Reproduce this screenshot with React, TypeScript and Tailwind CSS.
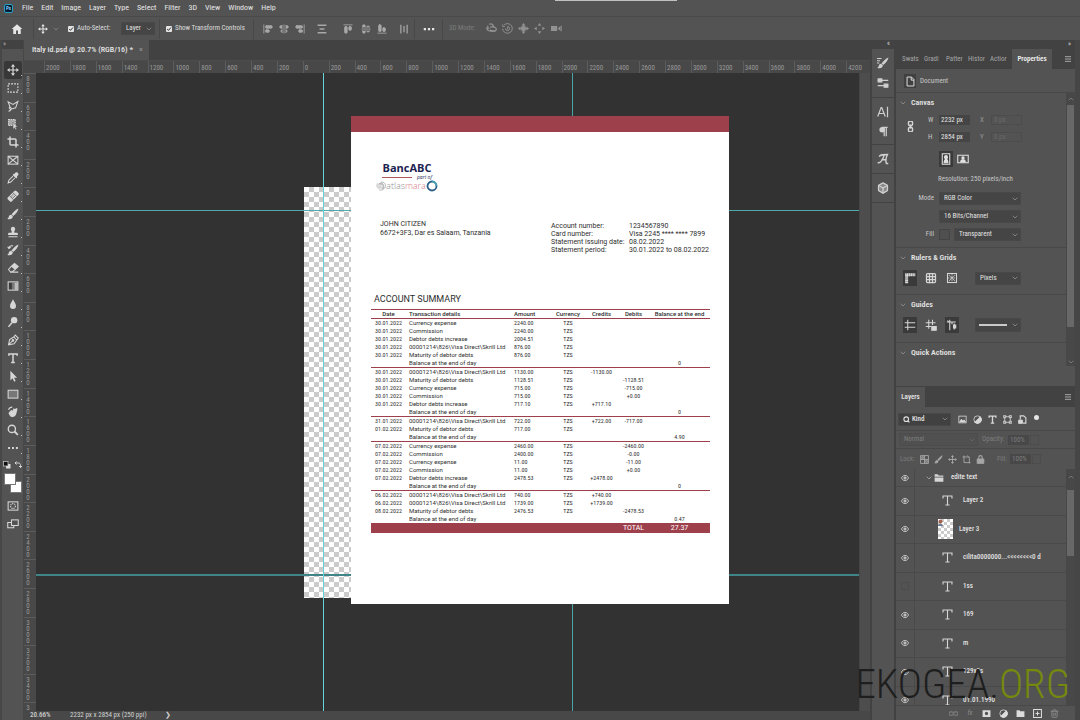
import type { ReactNode } from "react";
import {
  AlignCenterHorizontal,
  AlignCenterVertical,
  AlignEndHorizontal,
  AlignEndVertical,
  AlignStartHorizontal,
  AlignStartVertical,
  Box,
  ChevronDown,
  ChevronUp,
  Crop,
  Grid3x3,
  Image,
  Menu,
  Search,
  Trash2
} from "lucide-react";

const menuItems = ["File", "Edit", "Image", "Layer", "Type", "Select", "Filter", "3D", "View", "Window", "Help"];
const panelTabs = ["Swats", "Gradi", "Patter", "Histor", "Actior"];

const horizontalMarks = Array.from({ length: 32 }, (_, index) => Math.abs(index - 10) * 200);
const verticalMarks = Array.from({ length: 23 }, (_, index) => Math.abs(index - 4) * 200);

const accountFields = [
  ["Account number:", "1234567890"],
  ["Card number:", "Visa 2245 **** **** 7899"],
  ["Statement issuing date:", "08.02.2022"],
  ["Statement period:", "30.01.2022 to 08.02.2022"]
];

// date, details, amount, currency, credits, debits, balance
const groups = [
  [
    ["30.01.2022", "Currency expense", "2240.00", "TZS", "", "", ""],
    ["30.01.2022", "Commission", "2240.00", "TZS", "", "", ""],
    ["30.01.2022", "Debtor debts increase", "2004.51", "TZS", "", "", ""],
    ["30.01.2022", "00001214\\826\\Visa Direct\\Skrill Ltd", "876.00", "TZS", "", "", ""],
    ["30.01.2022", "Maturity of debtor debts", "876.00", "TZS", "", "", ""],
    ["", "Balance at the end of day", "", "", "", "", "0"]
  ],
  [
    ["30.01.2022", "00001214\\826\\Visa Direct\\Skrill Ltd", "1130.00", "TZS", "-1130.00", "", ""],
    ["30.01.2022", "Maturity of debtor debts", "1128.51", "TZS", "", "-1128.51", ""],
    ["30.01.2022", "Currency expense", "715.00", "TZS", "", "-715.00", ""],
    ["30.01.2022", "Commission", "715.00", "TZS", "", "+0.00", ""],
    ["30.01.2022", "Debtor debts increase", "717.10", "TZS", "+717.10", "", ""],
    ["", "Balance at the end of day", "", "", "", "", "0"]
  ],
  [
    ["31.01.2022", "00001214\\826\\Visa Direct\\Skrill Ltd", "722.00", "TZS", "+722.00", "-717.00", ""],
    ["01.02.2022", "Maturity of debtor debts", "717.00", "TZS", "", "", ""],
    ["", "Balance at the end of day", "", "", "", "", "4.90"]
  ],
  [
    ["07.02.2022", "Currency expense", "2460.00", "TZS", "", "-2460.00", ""],
    ["07.02.2022", "Commission", "2400.00", "TZS", "", "-0.00", ""],
    ["07.02.2022", "Currency expense", "11.00", "TZS", "", "-11.00", ""],
    ["07.02.2022", "Commission", "11.00", "TZS", "", "+0.00", ""],
    ["07.02.2022", "Debtor debts increase", "2478.53", "TZS", "+2478.00", "", ""],
    ["", "Balance at the end of day", "", "", "", "", "0"]
  ],
  [
    ["06.02.2022", "00001214\\826\\Visa Direct\\Skrill Ltd", "740.00", "TZS", "+740.00", "", ""],
    ["06.02.2022", "00001214\\826\\Visa Direct\\Skrill Ltd", "1739.00", "TZS", "+1739.00", "", ""],
    ["08.02.2022", "Maturity of debtor debts", "2476.53", "TZS", "", "-2478.53", ""],
    ["", "Balance at the end of day", "", "", "", "", "0.47"]
  ]
];

const layers = [
  { name: "Layer 2", visible: true },
  { name: "Layer 3", visible: true, thumb: true },
  { name: "cilita0000000...<<<<<<<<0 d", visible: true },
  { name: "1ss", visible: false },
  { name: "169", visible: true },
  { name: "m", visible: true },
  { name: "129x2s", visible: true },
  { name: "01.01.1990", visible: true }
];

function Glyph({ size = "size-3", children }: { size?: string; children: ReactNode }) {
  return (
    <svg viewBox="0 0 16 16" className={`${size} shrink-0`} fill="none" stroke="currentColor" strokeWidth="1.4" aria-hidden="true">
      {children}
    </svg>
  );
}

const moveShape = (
  <g fill="currentColor" stroke="none">
    <path d="M8 0l2.800 3.600H5.200zM8 16l2.800-3.600H5.200zM0 8l3.600-2.800v5.600zM16 8l-3.600-2.800v5.600z" />
    <path d="M7.200 3h1.600v10H7.200zM3 7.200h10v1.600H3z" />
  </g>
);

const brushShape = (
  <g fill="currentColor" stroke="none">
    <path d="M15.300.5c-3.500 1.600-7 4.700-9.300 8l2.200 2C11.500 8 14.500 4.500 15.300.5z" />
    <path d="M5.500 9c-2.200.1-3 1.500-3.200 3-.2 1.200-.9 1.900-2 2.200 2.900 1.500 7.400.8 7.500-3.200z" />
  </g>
);

const tools: { label: string; shape: ReactNode }[] = [
  { label: "Move", shape: moveShape },
  { label: "Marquee", shape: <rect x="1.500" y="2.500" width="13" height="11" strokeDasharray="2.500 1.500" /> },
  { label: "Lasso", shape: <path d="M4 9L1.500 2.500 8 6l6.500-4-3 8.500-5 1.500L4 9c-1.500.5-1.500 3 .5 3S4 15 2 15" /> },
  {
    label: "Object selection",
    shape: (
      <>
        <rect x="2" y="2" width="9" height="8" fill="currentColor" fillOpacity=".65" strokeDasharray="2 1" />
        <path d="M8 6v9l2-2 1.500 2.500 1.300-.8L11.500 12H14z" fill="currentColor" stroke="#535353" strokeWidth=".6" />
      </>
    )
  },
  { label: "Crop", shape: <Crop x="0" y="0" width="16" height="16" strokeWidth={3} /> },
  {
    label: "Frame",
    shape: (
      <>
        <rect x="1.500" y="3" width="13" height="10.500" />
        <path d="M1.500 3l13 10.500M14.500 3l-13 10.500" />
      </>
    )
  },
  {
    label: "Eyedropper",
    shape: (
      <>
        <path d="M9.500 2.500L11.500.8c2-1.300 4.600 1.200 3.500 3.300L13.300 6l.6 1-1.700 1.500L7.500 4l1.500-1.800z" fill="currentColor" stroke="none" />
        <path d="M8 5.500L2.500 11 1.500 14.500 5 13.500 10.500 8" />
      </>
    )
  },
  {
    label: "Healing brush",
    shape: (
      <g transform="rotate(-45 8 8)">
        <rect x="0" y="4.500" width="16" height="7.500" rx="2" fill="currentColor" stroke="none" />
        <path d="M5 4.500v7.500M11 4.500v7.500" stroke="#535353" strokeWidth="1" />
        <path d="M6.500 7h3M6.500 9.500h3" stroke="#535353" strokeDasharray="1 1" />
      </g>
    )
  },
  { label: "Brush", shape: brushShape },
  {
    label: "Clone stamp",
    shape: <path d="M8 1a3 3 0 00-2.500 4.500C6.500 7 6.500 8 6 9H3c-1 0-1.500.7-1.500 1.500V12h13v-1.500c0-.8-.5-1.500-1.500-1.500h-3c-.5-1-.5-2 .5-3.500A3 3 0 008 1zM2 13.500h12V15H2z" fill="currentColor" stroke="none" />
  },
  {
    label: "History brush",
    shape: (
      <>
        {brushShape}
        <path d="M1 3.500l1.500 2.500L5 4.500M2.500 6C3 3.500 5 2 8 2.500" />
      </>
    )
  },
  {
    label: "Eraser",
    shape: (
      <>
        <path d="M6 5.500L10 2l5 4-4 3.800z" fill="currentColor" />
        <path d="M6 5.500L2 10l2.500 3H7l4-3.200M4 13.500h11" />
      </>
    )
  },
  {
    label: "Gradient",
    shape: (
      <>
        <rect x="2.500" y="3.500" width="4" height="9.500" fill="#3c3c3c" stroke="none" />
        <rect x="6.500" y="3.500" width="3.500" height="9.500" fill="#777" stroke="none" />
        <rect x="10" y="3.500" width="4" height="9.500" fill="#bbb" stroke="none" />
        <rect x="1.500" y="2.500" width="13" height="11" />
      </>
    )
  },
  { label: "Blur", shape: <path d="M8 1.500C6.500 5 4 7.500 4 10.500a4 4 0 008 0C12 7.500 9.500 5 8 1.500z" fill="currentColor" stroke="none" /> },
  {
    label: "Dodge",
    shape: (
      <>
        <circle cx="9.500" cy="5.500" r="4.300" fill="currentColor" stroke="none" />
        <path d="M6.500 9L2 14.500" strokeWidth="2" />
      </>
    )
  },
  {
    label: "Pen",
    shape: (
      <>
        <path d="M2 14.500L3.500 7.500 9 4l4 4-3.500 5zM2 14.500L7.500 9M9 4l2-2.500L15 5.500 13 8" />
        <circle cx="8" cy="8.500" r="1" fill="currentColor" />
      </>
    )
  },
  { label: "Type", shape: <path d="M2.500 5V2.500h11V5M8 2.500v11M5.500 14h5" strokeWidth="2" /> },
  { label: "Path selection", shape: <path d="M4.500 1v13l3-3 2 4.500 2-1-2-4.300H13.500z" fill="currentColor" stroke="none" /> },
  { label: "Rectangle", shape: <rect x="1.500" y="3" width="13" height="10.500" fill="#777" /> },
  {
    label: "Hand",
    shape: (
      <>
        <path d="M3 8l3-3 1 1.500L9 3l1.500 1L13 2.500l1 1.500-1.500 6c-.8 3-3 5-6 4.500-2-.3-3-2-4.500-5z" fill="currentColor" stroke="none" />
        <path d="M2 5C3 2.500 5 1.500 7 1.500" />
      </>
    )
  },
  {
    label: "Zoom",
    shape: (
      <>
        <circle cx="6.500" cy="6.500" r="4.800" strokeWidth="1.800" />
        <path d="M10 10l4.500 4.500" strokeWidth="2.400" />
      </>
    )
  },
  { label: "More tools", shape: <path d="M1.500 8h2.600M6.700 8h2.600M11.900 8h2.600" strokeWidth="2.600" /> }
];

function Divider() {
  return <span className="h-5 w-px bg-[#484848]" />;
}

function IconButton({ label, className = "", children }: { label: string; className?: string; children: ReactNode }) {
  return (
    <button type="button" aria-label={label} className={`flex shrink-0 items-center justify-center ${className}`}>
      {children}
    </button>
  );
}

function Select({ label, value, className = "", dim = false }: { label: string; value: string; className?: string; dim?: boolean }) {
  return (
    <span className={`relative flex h-[13px] shrink-0 items-center border ${dim ? "border-[#4c4c4c] bg-[#505050] text-[#7d7d7d]" : "border-[#484848] bg-[#454545] text-[#e2e2e2]"} ${className}`}>
      <select aria-label={label} className="size-full appearance-none bg-transparent pl-1 text-[7px] leading-[11px]">
        <option>{value}</option>
      </select>
      <ChevronDown className={`pointer-events-none absolute right-px size-2 ${dim ? "text-[#6c6c6c]" : "text-[#a0a0a0]"}`} strokeWidth={2} />
    </span>
  );
}

function CheckOption({ id, label }: { id: string; label: string }) {
  return (
    <span className="flex items-center gap-[3px] whitespace-nowrap">
      <span className="relative flex size-[6px] shrink-0">
        <input id={id} type="checkbox" defaultChecked className="peer size-[6px] appearance-none rounded-[1px] bg-[#e4e4e4]" />
        <svg viewBox="0 0 6 6" className="pointer-events-none absolute inset-0 hidden size-[6px] peer-checked:block" fill="none" stroke="#333" strokeWidth="1">
          <path d="M1.200 3l1.300 1.400L4.900 1.500" />
        </svg>
      </span>
      <label htmlFor={id}>{label}</label>
    </span>
  );
}

function MenuBar() {
  return (
    <nav className="flex h-[17px] shrink-0 items-center border-b border-[#494949] pl-1 text-[8px] leading-[10px] text-[#e6e6e6]">
      <span className="mr-[9px] flex size-[9px] items-center justify-center rounded-[2px] border border-[#2aa3c4] bg-[#001d33] text-[5px] font-bold text-[#8fd3ff]">Ps</span>
      <div className="flex gap-2">
        {menuItems.map((item) => (
          <button key={item} type="button">
            {item}
          </button>
        ))}
      </div>
    </nav>
  );
}

function OptionsBar() {
  return (
    <div className="flex h-[23px] shrink-0 items-center text-[7px] leading-[9px] text-[#dedede]">
      <IconButton label="Home" className="w-[33px] text-[#e6e6e6]">
        <Glyph>
          <path d="M8 1.500L1 8h2v6.500h3.700V10h2.600v4.500H13V8h2z" fill="currentColor" stroke="none" />
        </Glyph>
      </IconButton>
      <Divider />
      <IconButton label="Move tool" className="w-[18px] text-[#e6e6e6]">
        <Glyph size="size-2.5">{moveShape}</Glyph>
      </IconButton>
      <ChevronDown className="mr-1 size-2 text-[#909090]" />
      <div className="w-[57px] pl-1">
        <CheckOption id="auto-select" label="Auto-Select:" />
      </div>
      <Select label="Auto-select target" value="Layer" className="w-[34px]" />
      <span className="w-1" />
      <Divider />
      <div className="w-[93px] pl-1.5">
        <CheckOption id="transform-controls" label="Show Transform Controls" />
      </div>
      <Divider />
      <div className="flex w-[160px] items-center pl-1.5 text-[#a8a8a8]">
        <IconButton label="Align left edges" className="w-4"><AlignStartVertical className="size-2.5" fill="currentColor" /></IconButton>
        <IconButton label="Align horizontal centers" className="w-4"><AlignCenterVertical className="size-2.5" fill="currentColor" /></IconButton>
        <IconButton label="Align right edges" className="w-4"><AlignEndVertical className="size-2.5" fill="currentColor" /></IconButton>
        <IconButton label="Distribute vertically" className="w-7">
          <Glyph size="size-2.5"><path d="M1 2h14M1 14h14M4 8h8" strokeWidth="2.200" /></Glyph>
        </IconButton>
        <IconButton label="Align top edges" className="ml-0.5 w-5"><AlignStartHorizontal className="size-2.5" fill="currentColor" /></IconButton>
        <IconButton label="Align vertical centers" className="w-4"><AlignCenterHorizontal className="size-2.5" fill="currentColor" /></IconButton>
        <IconButton label="Align bottom edges" className="w-4"><AlignEndHorizontal className="size-2.5" fill="currentColor" /></IconButton>
        <IconButton label="Distribute horizontally" className="w-7">
          <Glyph size="size-2.5"><path d="M3 1v14M13 1v14M8 3v10" strokeWidth="2" /></Glyph>
        </IconButton>
      </div>
      <Divider />
      <IconButton label="More options" className="w-[27px] text-[#e6e6e6]">
        <Glyph><path d="M1 8h3M6.500 8h3M12 8h3" strokeWidth="3" /></Glyph>
      </IconButton>
      <Divider />
      <span className="w-10 pl-1.5 text-[#7c7c7c]">3D Mode:</span>
      <div className="flex text-[#929292]">
        <IconButton label="Orbit" className="w-4">
          <Glyph size="size-[11px]"><path d="M5 2c3-2 7 1 5 4M2 6c-3 4 3 7 12 6M6 6c4-1 9 0 9 3s-6 3-9 1M3 4l-1 3 3 1" strokeWidth="1.800" /></Glyph>
        </IconButton>
        <IconButton label="Roll" className="w-4">
          <Glyph size="size-[11px]"><path d="M3 3a7 7 0 11-2 5M1 2v3h3M8 5a3 3 0 11-3 3M8 6v3" /></Glyph>
        </IconButton>
        <IconButton label="Pan" className="w-4">
          <Glyph size="size-[11px]">{moveShape}<rect x="5.500" y="5.500" width="5" height="5" fill="currentColor" /></Glyph>
        </IconButton>
        <IconButton label="Slide" className="w-[17px]">
          <Glyph size="size-[11px]"><path d="M8 0l2.500 4h-5zM0 8l4-2.500v5zM16 8l-4-2.500v5zM8 16l2.500-4h-5z" fill="currentColor" stroke="none" /></Glyph>
        </IconButton>
        <IconButton label="Camera" className="w-4">
          <Glyph size="size-[11px]"><path d="M0 4.500h9v7H0zM10 8l4-4v8zM15 4h1v8h-1z" fill="currentColor" stroke="none" /></Glyph>
        </IconButton>
      </div>
    </div>
  );
}

function Toolbar() {
  return (
    <aside className="flex w-6 shrink-0 flex-col border-r border-l-2 border-[#474747]">
      <div className="flex h-[9px] shrink-0 items-center bg-[#424242] pl-px text-[7px] leading-[9px] text-[#b0b0b0]">»</div>
      <div className="flex flex-col items-center pt-3 text-[#d6d6d6]">
        {tools.map((tool, index) => (
          <button
            key={tool.label}
            type="button"
            aria-label={tool.label}
            className={`relative flex h-[18px] w-[18px] items-center justify-center ${index === 0 ? "rounded-[2px] bg-[#383838]" : ""}`}
          >
            <Glyph>{tool.shape}</Glyph>
            <span className="absolute right-0 bottom-[3px] size-px bg-[#bdbdbd]" />
          </button>
        ))}
        <div className="flex h-4 w-full items-center justify-around">
          <Glyph size="size-2">
            <rect x="6" y="6" width="9" height="9" fill="#ddd" stroke="none" />
            <rect x="1" y="1" width="9" height="9" fill="#111" stroke="#ccc" />
          </Glyph>
          <Glyph size="size-2"><path d="M2 4h7c3 0 4 2 4 5v4M5 1L2 4l3 3M10 10l3 3 3-3" strokeWidth="2" /></Glyph>
        </div>
        <div className="relative h-5 w-[18px]">
          <span className="absolute right-0 bottom-0 size-3 border border-[#777] bg-white" />
          <span className="absolute top-0 left-0 size-3 border border-[#777] bg-white" />
        </div>
        <button type="button" aria-label="Quick mask" className="mt-1 flex h-[18px] items-center">
          <Glyph><rect x="1.500" y="2.500" width="13" height="11" /><circle cx="8" cy="8" r="3.200" strokeDasharray="1.500 1" /></Glyph>
        </button>
        <button type="button" aria-label="Screen mode" className="flex h-[18px] items-center">
          <Glyph><rect x="1" y="6" width="8" height="7" /><rect x="6" y="2.500" width="9" height="7.500" fill="#535353" /></Glyph>
        </button>
      </div>
    </aside>
  );
}

function Paper() {
  return (
    <article className="absolute top-[43px] left-[315px] h-[488px] w-[378px] border-t-16 border-[#9e404c] bg-white pr-[19px] pl-5 font-[Roboto,sans-serif] text-[#2e2e2e]">
      <div className="mt-7 ml-1.5 flex w-[60px] flex-col items-center font-['Open_Sans',sans-serif]">
        <div className="text-[11px] leading-[15px] font-bold text-[#1b2250]">BancABC</div>
        <div className="flex h-1 w-[50px] items-center justify-between text-[5px] leading-[4px] text-[#1b2250] italic">
          <span className="h-px w-[30px] bg-[#b0575c]" />
          part of
        </div>
        <div className="flex items-center text-[9px] leading-[13px] font-light text-[#8d8d8d]">
          <svg viewBox="0 0 16 16" className="size-2.5" fill="none" stroke="#8d8d8d" strokeWidth="1" aria-hidden="true">
            <path d="M1 5h9M0 8h9M2 11h8M7 2c7-2 10 5 7 9s-7 4-9 3M5 4c5-1 8 4 5 8M9 3c4 2 4 6 2 10" />
          </svg>
          <span>atlas</span>
          <span className="text-[#d2767a]">mara</span>
          <svg viewBox="0 0 16 16" className="size-3" fill="none" stroke="#2c5f86" strokeWidth="2.400" aria-hidden="true">
            <circle cx="8" cy="8" r="6" />
            <path d="M8 2a6 6 0 016 6" stroke="#49a5b5" />
          </svg>
        </div>
      </div>

      <div className="mt-7 flex justify-between text-[7px]">
        <address className="pl-[9px] leading-[9px] not-italic">
          <p>JOHN CITIZEN</p>
          <p>6672+3F3, Dar es Salaam, Tanzania</p>
        </address>
        <dl className="mt-0.5 grid w-[159px] grid-cols-[78px_1fr] leading-[8px] whitespace-nowrap">
          {accountFields.map(([term, value]) => (
            <div key={term} className="contents">
              <dt>{term}</dt>
              <dd>{value}</dd>
            </div>
          ))}
        </dl>
      </div>

      <h1 className="mt-[39px] pl-[3px] text-[9px] leading-[12px]">ACCOUNT SUMMARY</h1>
      <table className="mt-1 w-full table-fixed border-collapse text-center text-[6px] leading-[8px] whitespace-nowrap">
        <colgroup>
          <col className="w-[35px]" />
          <col className="w-[108px]" />
          <col className="w-[37px]" />
          <col className="w-[34px]" />
          <col className="w-[33px]" />
          <col className="w-[31px]" />
          <col className="w-[61px]" />
        </colgroup>
        <thead>
          <tr className="border-y border-[#9e404c]">
            <th className="font-medium">Date</th>
            <th className="pl-[3px] text-left font-medium">Transaction details</th>
            <th className="text-left font-medium">Amount</th>
            <th className="font-medium">Currency</th>
            <th className="font-medium">Credits</th>
            <th className="font-medium">Debits</th>
            <th className="font-medium">Balance at the end</th>
          </tr>
        </thead>
        {groups.map((rows, groupIndex) => (
          <tbody key={groupIndex} className="border-b border-[#9e404c]">
            {rows.map((row, rowIndex) => (
              <tr key={rowIndex}>
                {row.map((cell, column) => (
                  <td
                    key={column}
                    className={column === 1 ? "pl-[3px] text-left" : column === 2 ? "text-left font-['Roboto_Condensed',sans-serif]" : "font-['Roboto_Condensed',sans-serif]"}
                  >
                    {cell}
                  </td>
                ))}
              </tr>
            ))}
          </tbody>
        ))}
        <tfoot>
          <tr className="bg-[#9e404c] text-[7px] leading-[9px] text-white">
            <td colSpan={5} />
            <td>TOTAL</td>
            <td>27.37</td>
          </tr>
        </tfoot>
      </table>
    </article>
  );
}

function Workspace() {
  return (
    <main className="flex min-w-0 flex-1 flex-col bg-[#424242]">
      <div className="flex h-5 shrink-0">
        <div className="flex w-[125px] items-center gap-1.5 bg-[#535353] pl-2 text-[8px] leading-[10px] font-medium whitespace-nowrap text-[#e6e6e6]">
          Italy id.psd @ 20.7% (RGB/16) *
          <button type="button" aria-label="Close document" className="text-[#8c8c8c]">×</button>
        </div>
      </div>
      <div className="flex h-[13px] shrink-0 overflow-hidden border-t border-[#4c4c4c] bg-[#484848] pl-5 text-[7px] leading-[14px] text-[#989898]">
        <div className="flex w-[828px] shrink-0">
          {horizontalMarks.map((mark, index) => (
            <span key={index} className="flex-1 border-l border-[#5c5c5c] pl-px">
              {mark}
            </span>
          ))}
        </div>
      </div>
      <div className="flex min-h-0 flex-1">
        <div className="w-3 shrink-0 overflow-hidden bg-[#484848] text-center text-[7px] leading-[6px] text-[#989898]">
          <div className="flex h-[658px] flex-col">
            {verticalMarks.map((mark, index) => (
              <span key={index} className="flex flex-1 flex-col border-t border-[#5c5c5c] pt-0.5 pr-1">
                {String(mark).split("").map((digit, place) => (
                  <span key={place}>{digit}</span>
                ))}
              </span>
            ))}
          </div>
        </div>
        <div className="relative min-w-0 flex-1 overflow-hidden bg-[#323232]">
          <div className="absolute top-[114px] left-[268px] h-[411px] w-[60px] bg-white bg-[conic-gradient(#cbcbcb_25%,transparent_0_50%,#cbcbcb_0_75%,transparent_0)] bg-size-[10px_10px]" />
          <div className="absolute inset-x-0 top-[137px] h-px bg-[#4fa9ad]" />
          <div className="absolute inset-x-0 top-[501px] h-0.5 bg-[#3f8588]" />
          <div className="absolute inset-y-0 left-[287px] w-px bg-[#66d2d6]" />
          <div className="absolute inset-y-0 left-[536px] w-px bg-[#4aa3a4]" />
          <Paper />
        </div>
        <div className="w-[11px] shrink-0 border-l border-[#454545] bg-[#4d4d4d]" />
      </div>
      <footer className="flex h-[9px] shrink-0 bg-[#484848] pl-1.5 text-[7px] leading-[9px] text-[#d0d0d0]">
        <span className="w-10 font-medium">20.66%</span>
        <span>2232 px x 2854 px (250 ppi)</span>
        <span className="ml-[18px]">❯</span>
      </footer>
    </main>
  );
}

function PanelStrip() {
  return (
    <aside className="flex w-[26px] shrink-0 flex-col border-x-2 border-[#424242] text-[#cfcfcf]">
      <div className="flex h-[9px] shrink-0 items-center justify-end bg-[#424242] pr-1 text-[7px] leading-[9px]">«</div>
      <div className="flex h-[49px] flex-col items-center justify-center gap-2 border-b border-[#424242]">
        <IconButton label="Brush settings"><Glyph>{brushShape}<path d="M0 2h6M0 5h4M0 8h3" /></Glyph></IconButton>
        <IconButton label="Adjust"><Glyph><path d="M1 4.500h14M1 11.500h14" strokeWidth="1.800" /><path d="M1.500 2.500h5v4h-5zM9.500 9.500h5v4h-5z" fill="currentColor" /></Glyph></IconButton>
      </div>
      <div className="flex h-[47px] flex-col items-center justify-center gap-2 border-b border-[#424242]">
        <IconButton label="Character"><Glyph><path d="M1 14L5.500 2h.8L11 14M2.500 10h7M14 1v14" strokeWidth="1.600" /></Glyph></IconButton>
        <IconButton label="Paragraph"><Glyph size="size-[11px]"><path d="M6 2h8M9 2v13M12 2v13" strokeWidth="1.800" /><circle cx="6" cy="5.500" r="4" fill="currentColor" stroke="none" /></Glyph></IconButton>
      </div>
      <IconButton label="Glyphs" className="h-[29px] border-b border-[#424242]">
        <Glyph><path d="M1 12.500c3 2 6-2 9-10.500M3 5c1-3 5-3 11-3-2 4-3 8-1.500 12H15M6 9h7" strokeWidth="1.800" /></Glyph>
      </IconButton>
      <IconButton label="3D" className="h-[29px] border-b border-[#424242]">
        <Box className="size-3" strokeWidth={2.500} fill="#8a8a8a" />
      </IconButton>
    </aside>
  );
}

function SectionTitle({ children }: { children: ReactNode }) {
  return (
    <h2 className="flex h-4 items-center gap-1 pl-[3px] text-[8px] leading-[10px] font-semibold text-[#e2e2e2]">
      <ChevronDown className="size-2 text-[#a0a0a0]" />
      {children}
    </h2>
  );
}

function NumberField({ id, label, value, dim = false }: { id: string; label: string; value: string; dim?: boolean }) {
  return (
    <span className={`flex items-center gap-1.5 ${dim ? "text-[#969696]" : ""}`}>
      <label htmlFor={id} className="w-[5px]">{label}</label>
      <input
        id={id}
        defaultValue={value}
        disabled={dim}
        className={`h-2.5 w-[31px] pl-0.5 text-[7px] leading-[9px] ${dim ? "border border-[#4c4c4c] text-[#696969]" : "bg-[#454545] text-[#e6e6e6]"}`}
      />
    </span>
  );
}

function Properties() {
  return (
    <section className="flex h-[337px] shrink-0 flex-col text-[7px] leading-[9px] text-[#c6c6c6]">
      <div className="flex h-5 shrink-0 items-center bg-[#424242] pl-1.5 text-[#a6a6a6]">
        {panelTabs.map((tab) => (
          <button key={tab} type="button" className="mr-1 w-[18px] text-left whitespace-nowrap">
            {tab}
          </button>
        ))}
        <button type="button" className="h-full w-10 bg-[#535353] font-semibold text-[#efefef]">Properties</button>
        <IconButton label="Panel menu" className="ml-auto w-3.5"><Menu className="size-2" strokeWidth={3} /></IconButton>
      </div>
      <div className="flex h-6 shrink-0 items-center gap-1 border-b border-[#484848] pt-px pl-2">
        <span className="flex h-3.5 w-3 items-center justify-center bg-[#404040] text-[#e2e2e2]">
          <Glyph size="size-[11px]"><path d="M3 1.500h6.500L13 5v9.500H3zM9 1.500V6h4" /></Glyph>
        </span>
        Document
      </div>
      <div className="flex min-h-0 flex-1">
        <div className="min-w-0 flex-1">
          <div className="h-[155px] border-b border-[#484848] pt-0.5">
            <SectionTitle>Canvas</SectionTitle>
            <div className="flex items-center gap-3 pl-[9px]">
              <span className="text-[#d6d6d6]">
                <Glyph size="size-[11px]"><rect x="5" y="0" width="6" height="7" rx="3" strokeWidth="2" /><rect x="5" y="9" width="6" height="7" rx="3" strokeWidth="2" /><path d="M8 5v6" strokeWidth="2" /></Glyph>
              </span>
              <div className="grid grid-cols-[52px_1fr] gap-y-[7px] pt-1">
                <NumberField id="canvas-w" label="W" value="2232 px" />
                <NumberField id="canvas-x" label="X" value="0 px" dim />
                <NumberField id="canvas-h" label="H" value="2854 px" />
                <NumberField id="canvas-y" label="Y" value="0 px" dim />
              </div>
            </div>
            <div className="mt-[9px] flex gap-[3px] pl-[43px] text-[#e2e2e2]">
              <IconButton label="Portrait" className="h-4 w-3.5 bg-[#3a3a3a]">
                <Glyph><path d="M3 1h10v14H3z" /><path d="M8 3.500a2 2 0 010 4 2 2 0 010-4M5.500 13c0-6 5-6 5 0z" fill="currentColor" /></Glyph>
              </IconButton>
              <IconButton label="Landscape" className="h-4 w-3.5">
                <Glyph><path d="M1 3h14v10H1z" /><path d="M8 5a1.500 1.500 0 010 3 1.500 1.500 0 010-3M5 12c0-4 6-4 6 0z" fill="currentColor" /></Glyph>
              </IconButton>
            </div>
            <p className="mt-2 pl-[42px]">Resolution: 250 pixels/inch</p>
            <div className="mt-2 flex flex-col gap-[5px]">
              <div className="flex items-center">
                <span className="w-[43px] pr-[5px] text-right">Mode</span>
                <Select label="Mode" value="RGB Color" className="w-[82px]" />
              </div>
              <div className="flex pl-[43px]">
                <Select label="Bit depth" value="16 Bits/Channel" className="w-[82px]" />
              </div>
              <div className="flex items-center">
                <span className="w-[43px] pr-[5px] text-right">Fill</span>
                <span className="mr-1 size-[11px] border border-[#444] bg-[#4f4f4f]" />
                <Select label="Fill" value="Transparent" className="w-[67px]" />
              </div>
            </div>
          </div>
          <div className="h-[47px] border-b border-[#484848] pt-0.5">
            <SectionTitle>Rulers & Grids</SectionTitle>
            <div className="mt-1 flex items-center gap-[7px] pl-[7px] text-[#d6d6d6]">
              <IconButton label="Rulers" className="h-4 w-3.5 bg-[#3a3a3a]"><Glyph><path d="M3.500 15V3.500H15" strokeWidth="4" strokeDasharray="2 .4" /></Glyph></IconButton>
              <IconButton label="Grid" className="h-4 w-3.5"><Grid3x3 className="size-3" strokeWidth={2.500} /></IconButton>
              <IconButton label="Pixel grid" className="h-4 w-3.5">
                <Glyph><rect x="2" y="2" width="12" height="12" /><path d="M4 4l8 8M12 4l-8 8M8 3v10M3 8h10" strokeDasharray="1 1" /></Glyph>
              </IconButton>
              <Select label="Units" value="Pixels" className="ml-[9px] w-[46px]" />
            </div>
          </div>
          <div className="h-12 border-b border-[#484848] pt-0.5">
            <SectionTitle>Guides</SectionTitle>
            <div className="mt-1 flex items-center gap-[7px] pl-[7px] text-[#d6d6d6]">
              <IconButton label="Show guides" className="h-4 w-3.5 bg-[#3a3a3a]"><Glyph><path d="M5 1v14M1 5h14M1 11h14M5 5v6" /></Glyph></IconButton>
              <IconButton label="Lock guides" className="h-4 w-3.5"><Glyph><path d="M5 1v12M10 1v7M1 5h13M1 10h7" /><path d="M9 10h6v5H9z" fill="currentColor" /></Glyph></IconButton>
              <IconButton label="Smart guides" className="h-4 w-3.5 bg-[#3a3a3a]"><Glyph><path d="M5 1v14M1 4h12M8 4v3M11 6v8M2 2l3 3" /><path d="M10 8h3v4h-3z" fill="currentColor" /></Glyph></IconButton>
              <span className="relative ml-[9px] flex h-3.5 w-[46px] items-center border border-[#484848] bg-[#454545]">
                <select aria-label="Guide style" className="size-full appearance-none bg-transparent text-transparent"><option></option></select>
                <span className="pointer-events-none absolute left-[3px] h-0.5 w-7 bg-[#c9c9c9]" />
                <ChevronDown className="pointer-events-none absolute right-px size-2 text-[#a0a0a0]" />
              </span>
            </div>
          </div>
          <div className="pt-0.5">
            <SectionTitle>Quick Actions</SectionTitle>
          </div>
        </div>
        <div className="mb-5 flex w-[9px] flex-col items-center bg-[#484848] text-[#8c8c8c]">
          <ChevronUp className="my-0.5 size-2" />
          <span className="h-[222px] w-[7px] bg-[#686868]" />
          <ChevronDown className="mt-auto size-2" />
        </div>
      </div>
    </section>
  );
}

function EyeButton({ visible }: { visible: boolean }) {
  return (
    <button type="button" aria-label="Toggle visibility" className="flex w-[19px] shrink-0 items-center justify-center self-stretch border-r border-[#4a4a4a]">
      {visible ? (
        <Glyph size="size-2"><path d="M1 8c3-7 11-7 14 0-3 7-11 7-14 0z" strokeWidth="2" /><circle cx="8" cy="8" r="2.500" fill="currentColor" /></Glyph>
      ) : (
        <span className="size-2 border border-[#4c4c4c]" />
      )}
    </button>
  );
}

function Layers() {
  return (
    <section className="flex min-h-0 flex-1 flex-col border-t border-[#424242] text-[7px] leading-[9px] text-[#e2e2e2]">
      <div className="flex h-5 shrink-0 items-center bg-[#424242]">
        <button type="button" className="h-full w-[29px] bg-[#535353] font-semibold">Layers</button>
        <IconButton label="Layers menu" className="ml-auto w-3.5 text-[#a6a6a6]"><Menu className="size-2" strokeWidth={3} /></IconButton>
      </div>
      <div className="flex h-6 shrink-0 items-center gap-1 border-b border-[#484848] pt-px pl-0.5">
        <span className="relative flex h-[13px] w-[53px] items-center border border-[#484848] bg-[#414141] pl-1">
          <Search className="size-[7px] shrink-0" strokeWidth={3.500} />
          <select aria-label="Layer filter" className="w-full appearance-none bg-transparent pl-0.5 font-medium"><option>Kind</option></select>
          <ChevronDown className="pointer-events-none absolute right-px size-2 text-[#a0a0a0]" />
        </span>
        <div className="flex text-[#d8d8d8]">
          <IconButton label="Pixel layers" className="w-[15px]"><Glyph size="size-[9px]"><rect x="1.500" y="2" width="13" height="12" /><path d="M3 12.500l3-5 2.500 3 2-2 3 4z" fill="currentColor" /></Glyph></IconButton>
          <IconButton label="Adjustment layers" className="w-[15px]"><Glyph size="size-[9px]"><circle cx="8" cy="8" r="6.500" /><path d="M3 13L13 3a7 7 0 01-10 10z" fill="currentColor" /></Glyph></IconButton>
          <IconButton label="Type layers" className="w-[15px]"><Glyph size="size-[9px]"><path d="M2 5V2h12v3M8 2v13M5 14.500h6" strokeWidth="2.400" /></Glyph></IconButton>
          <IconButton label="Shape layers" className="w-[15px]"><Glyph size="size-[9px]"><path d="M3 3h10v10H3zM1 1h4v4H1zM11 1h4v4h-4zM1 11h4v4H1zM11 11h4v4h-4z" /></Glyph></IconButton>
          <IconButton label="Smart objects" className="w-[15px]"><Glyph size="size-[9px]"><path d="M4 8V1.500h6L14 5v9.500H9" strokeWidth="2" /><path d="M1 9h7v6H1z" fill="currentColor" /></Glyph></IconButton>
          <span className="mb-1 ml-1 size-[5px] rounded-full bg-[#e6e6e6]" />
        </div>
      </div>
      <div className="flex h-[18px] shrink-0 items-center border-b border-[#484848] pl-[3px] text-[#7d7d7d]">
        <Select label="Blend mode" value="Normal" className="w-[79px]" dim />
        <label htmlFor="opacity" className="ml-1 w-[26px]">Opacity:</label>
        <input id="opacity" defaultValue="100%" className="h-2.5 w-[21px] bg-[#484848] pl-0.5" />
        <span className="ml-px h-2.5 w-[9px] border border-[#4c4c4c]" />
      </div>
      <div className="flex h-5 shrink-0 items-center pl-1 text-[#7d7d7d]">
        <span className="w-[17px]">Lock:</span>
        <div className="flex text-[#a6a6a6]">
          <IconButton label="Lock transparent pixels" className="w-3.5"><Glyph size="size-[9px]"><path d="M1 1h14v14H1zM8 1v14M1 8h14M3 3h3v3H3zM10 10h3v3h-3z" strokeWidth="1.600" /></Glyph></IconButton>
          <IconButton label="Lock image pixels" className="w-3.5"><Glyph size="size-[9px]">{brushShape}</Glyph></IconButton>
          <IconButton label="Lock position" className="w-3.5"><Glyph size="size-[9px]">{moveShape}</Glyph></IconButton>
          <IconButton label="Lock artboard" className="w-3.5"><Glyph size="size-[9px]"><path d="M1 3.500h12V15M3.500 1v12.500H15M9 1l3 2.500" strokeWidth="1.600" /></Glyph></IconButton>
          <IconButton label="Lock all" className="w-3.5"><Glyph size="size-[9px]"><path d="M2 7h12v8H2z" fill="currentColor" /><path d="M5 7V4a3 3 0 016 0v3" strokeWidth="2" /></Glyph></IconButton>
        </div>
        <label htmlFor="fill" className="ml-2.5 w-[13px]">Fill:</label>
        <input id="fill" defaultValue="100%" className="h-2.5 w-[21px] bg-[#484848] pl-0.5" />
        <span className="ml-px h-2.5 w-[9px] border border-[#4c4c4c]" />
      </div>
      <div className="flex min-h-0 flex-1 overflow-hidden">
        <div className="flex min-w-0 flex-1 flex-col text-[#bdbdbd]">
          <div className="flex h-[18px] shrink-0 items-center border-b border-[#4a4a4a]">
            <EyeButton visible />
            <ChevronDown className="ml-2.5 size-2" />
            <span className="ml-px text-[#d6d6d6]">
              <Glyph size="size-2.5"><path d="M1 2h5l1.500 2H15v2H1zM1 7h14v7H1z" fill="currentColor" stroke="none" /></Glyph>
            </span>
            <span className="ml-[7px] font-medium text-[#e2e2e2]">edite text</span>
          </div>
          <ul className="grid h-[228px] shrink-0 auto-rows-fr">
            {layers.map((layer) => (
              <li key={layer.name} className="flex min-h-0 items-center border-b border-[#4a4a4a]">
                <EyeButton visible={layer.visible} />
                {layer.thumb ? (
                  <span className="mr-1.5 ml-[23px] h-5 w-[15px] bg-white bg-[conic-gradient(#cbcbcb_25%,transparent_0_50%,#cbcbcb_0_75%,transparent_0)] bg-size-[6px_6px]">
                    <svg viewBox="0 0 5 7" className="h-[7px] w-[5px]" aria-hidden="true">
                      <path d="M0 7c0-3 5-3 5 0z" fill="#6c7a90" />
                      <circle cx="2.500" cy="2.500" r="2" fill="#a3624f" />
                    </svg>
                  </span>
                ) : (
                  <span className="mr-2.5 ml-[27px] text-[#d6d6d6]">
                    <Glyph size="size-[11px]"><path d="M1.500 5V1.500h13V5M8 1.500V14M5 14.500h6" strokeWidth="1.600" /></Glyph>
                  </span>
                )}
                <span className="font-medium text-[#e2e2e2]">{layer.name}</span>
              </li>
            ))}
          </ul>
        </div>
        <div className="flex w-[9px] flex-col items-center bg-[#484848] text-[#8c8c8c]">
          <ChevronUp className="mt-1 mb-[9px] size-2" />
          <span className="h-[66px] w-[7px] bg-[#686868]" />
        </div>
      </div>
      <div className="flex h-[15px] shrink-0 items-center justify-end gap-2 border-t border-[#484848] pt-px pr-4 text-[#dcdcdc]">
        <IconButton label="Link layers" className="text-[#7d7d7d]"><Glyph size="size-[9px]"><rect x="0" y="5" width="8" height="6" rx="3" strokeWidth="2" /><rect x="8" y="5" width="8" height="6" rx="3" strokeWidth="2" /></Glyph></IconButton>
        <button type="button" aria-label="Layer style" className="w-2 text-[#8c8c8c] italic">fx</button>
        <IconButton label="Add mask"><Glyph size="size-[9px]"><path d="M1 2h14v12H1zM8 5a3 3 0 100 6 3 3 0 000-6z" fill="currentColor" fillRule="evenodd" stroke="none" /></Glyph></IconButton>
        <IconButton label="New adjustment"><Glyph size="size-[9px]"><circle cx="8" cy="8" r="6.500" /><path d="M3 13L13 3a7 7 0 01-10 10z" fill="currentColor" /></Glyph></IconButton>
        <IconButton label="New group"><Glyph size="size-[9px]"><path d="M1 2h5l1.500 2H15v10H1z" fill="currentColor" stroke="none" /></Glyph></IconButton>
        <IconButton label="New layer"><Glyph size="size-[9px]"><path d="M1 1h14v14H1zM8 4.500v7M4.500 8h7" strokeWidth="1.800" /></Glyph></IconButton>
        <IconButton label="Delete layer" className="text-[#8c8c8c]"><Trash2 className="size-[9px]" strokeWidth={2.500} /></IconButton>
      </div>
    </section>
  );
}

export default function App() {
  return (
    <div className="relative flex h-screen w-full flex-col overflow-hidden bg-[#535353] font-['Roboto_Condensed','Open_Sans',sans-serif]">
      <MenuBar />
      <OptionsBar />
      <div className="flex min-h-0 flex-1">
        <Toolbar />
        <Workspace />
        <PanelStrip />
        <div className="flex w-[184px] shrink-0 border-r-[5px] border-[#464646]">
          <div className="flex min-w-0 flex-1 flex-col">
            <div className="flex h-[9px] shrink-0 items-center justify-end bg-[#424242] pr-1 text-[7px] leading-[9px] text-[#cfcfcf]">»</div>
            <Properties />
            <Layers />
          </div>
        </div>
      </div>
      <div className="absolute top-0 left-[555px] h-px w-[122px] bg-[#bfc2bf]" />
      <div className="pointer-events-none absolute right-2.5 bottom-2 font-['Roboto_Condensed_Light','Roboto_Condensed',sans-serif] text-[41px] leading-[56px] font-light text-[#1e1e1e]">
        EKOGEA.<span className="text-[#76890f]">ORG</span>
      </div>
    </div>
  );
}
